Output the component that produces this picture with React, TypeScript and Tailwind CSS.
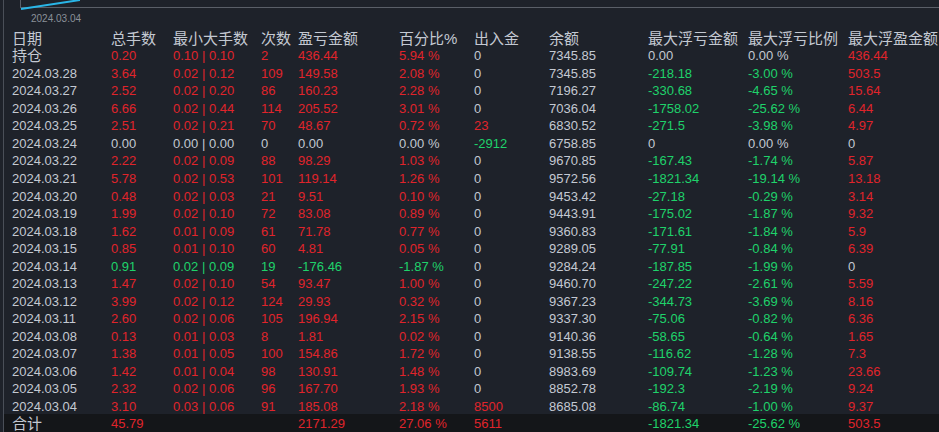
import React from "react";

type C = "r" | "g" | "w";
const R = "text-[#e0242b]", G = "text-[#1fd26a]", W = "text-[#c4c9d2]";
const col = (c: C) => (c === "r" ? R : c === "g" ? G : W);

const rows: [string, string, string, string, string, string, string, string, string, string, string, string][] = [
  ["持仓", "0.20", "0.10 | 0.10", "2", "436.44", "5.94 %", "0", "7345.85", "0.00", "0.00 %", "436.44", "rwwwr"],
  ["2024.03.28", "3.64", "0.02 | 0.12", "109", "149.58", "2.08 %", "0", "7345.85", "-218.18", "-3.00 %", "503.5", "rwggr"],
  ["2024.03.27", "2.52", "0.02 | 0.20", "86", "160.23", "2.28 %", "0", "7196.27", "-330.68", "-4.65 %", "15.64", "rwggr"],
  ["2024.03.26", "6.66", "0.02 | 0.44", "114", "205.52", "3.01 %", "0", "7036.04", "-1758.02", "-25.62 %", "6.44", "rwggr"],
  ["2024.03.25", "2.51", "0.02 | 0.21", "70", "48.67", "0.72 %", "23", "6830.52", "-271.5", "-3.98 %", "4.97", "rrggr"],
  ["2024.03.24", "0.00", "0.00 | 0.00", "0", "0.00", "0.00 %", "-2912", "6758.85", "0", "0.00 %", "0", "wgwww"],
  ["2024.03.22", "2.22", "0.02 | 0.09", "88", "98.29", "1.03 %", "0", "9670.85", "-167.43", "-1.74 %", "5.87", "rwggr"],
  ["2024.03.21", "5.78", "0.02 | 0.53", "101", "119.14", "1.26 %", "0", "9572.56", "-1821.34", "-19.14 %", "13.18", "rwggr"],
  ["2024.03.20", "0.48", "0.02 | 0.03", "21", "9.51", "0.10 %", "0", "9453.42", "-27.18", "-0.29 %", "3.14", "rwggr"],
  ["2024.03.19", "1.99", "0.02 | 0.10", "72", "83.08", "0.89 %", "0", "9443.91", "-175.02", "-1.87 %", "9.32", "rwggr"],
  ["2024.03.18", "1.62", "0.01 | 0.09", "61", "71.78", "0.77 %", "0", "9360.83", "-171.61", "-1.84 %", "5.9", "rwggr"],
  ["2024.03.15", "0.85", "0.01 | 0.10", "60", "4.81", "0.05 %", "0", "9289.05", "-77.91", "-0.84 %", "6.39", "rwggr"],
  ["2024.03.14", "0.91", "0.02 | 0.09", "19", "-176.46", "-1.87 %", "0", "9284.24", "-187.85", "-1.99 %", "0", "gwggw"],
  ["2024.03.13", "1.47", "0.02 | 0.10", "54", "93.47", "1.00 %", "0", "9460.70", "-247.22", "-2.61 %", "5.59", "rwggr"],
  ["2024.03.12", "3.99", "0.02 | 0.12", "124", "29.93", "0.32 %", "0", "9367.23", "-344.73", "-3.69 %", "8.16", "rwggr"],
  ["2024.03.11", "2.60", "0.02 | 0.06", "105", "196.94", "2.15 %", "0", "9337.30", "-75.06", "-0.82 %", "6.36", "rwggr"],
  ["2024.03.08", "0.13", "0.01 | 0.03", "8", "1.81", "0.02 %", "0", "9140.36", "-58.65", "-0.64 %", "1.65", "rwggr"],
  ["2024.03.07", "1.38", "0.01 | 0.05", "100", "154.86", "1.72 %", "0", "9138.55", "-116.62", "-1.28 %", "7.3", "rwggr"],
  ["2024.03.06", "1.42", "0.01 | 0.04", "98", "130.91", "1.48 %", "0", "8983.69", "-109.74", "-1.23 %", "23.66", "rwggr"],
  ["2024.03.05", "2.32", "0.02 | 0.06", "96", "167.70", "1.93 %", "0", "8852.78", "-192.3", "-2.19 %", "9.24", "rwggr"],
  ["2024.03.04", "3.10", "0.03 | 0.06", "91", "185.08", "2.18 %", "8500", "8685.08", "-86.74", "-1.00 %", "9.37", "rrggr"],
];

const widths = ["w-[99px]", "w-[62px]", "w-[88px]", "w-[37px]", "w-[101px]", "w-[75px]", "w-[75px]", "w-[99px]", "w-[100px]", "w-[100px]", "w-[91px]"];
const heads = ["日期", "总手数", "最小大手数", "次数", "盈亏金额", "百分比%", "出入金", "余额", "最大浮亏金额", "最大浮亏比例", "最大浮盈金额"];

export default function App() {
  return (
    <div className="w-[939px] h-[432px] overflow-hidden bg-[#1e222a] relative" style={{ fontFamily: '"Liberation Sans", "Noto Sans CJK SC", sans-serif' }}>
      <div className="absolute left-[3px] top-0 bottom-0 w-px bg-[#4a4f58]" />
      <div className="h-[30px] relative">
        <div className="absolute left-[20px] top-0 w-[919px] h-[8px] border-l border-b border-[#5a5f68]" />
        <svg className="absolute left-[20px] top-0" width="60" height="10">
          <path d="M1 9 L60 0" stroke="#29b6e8" strokeWidth="2" fill="none" />
        </svg>
        <div className="absolute left-[31px] top-[11px] text-[10px] text-[#8a9099]">2024.03.04</div>
      </div>
      <div className="pl-[12px] flex h-[17px] items-center text-[15px] leading-none text-[#c4c9d2]">
        {heads.map((h, i) => (
          <div key={i} className={`${widths[i]} shrink-0 whitespace-nowrap`}>{h}</div>
        ))}
      </div>
      <div className="h-[368px] flex flex-col">
        {rows.map((r, ri) => {
          const cs = r[11].split("") as C[];
          const cc: C[] = ["w", cs[0], cs[0], cs[0], cs[0], cs[0], cs[1], "w", cs[2], cs[3], cs[4]];
          return (
            <div key={ri} className={`pl-[12px] flex flex-1 items-center leading-none ${ri === 0 ? "text-[15px]" : "text-[13px]"}`}>
              {r.slice(0, 11).map((v, i) => (
                <div key={i} className={`${widths[i]} shrink-0 whitespace-nowrap ${col(cc[i])} ${i === 0 ? "" : "text-[13px]"}`}>{v}</div>
              ))}
            </div>
          );
        })}
      </div>
      <div className="absolute left-[4px] right-0 top-[414px] bottom-0 bg-[#141619] pl-[8px] flex items-center text-[13px] leading-none">
        <div className={`${widths[0]} shrink-0 text-[15px] ${W}`}>合计</div>
        <div className={`${widths[1]} shrink-0 ${R}`}>45.79</div>
        <div className={`${widths[2]} shrink-0`} />
        <div className={`${widths[3]} shrink-0`} />
        <div className={`${widths[4]} shrink-0 ${R}`}>2171.29</div>
        <div className={`${widths[5]} shrink-0 ${R}`}>27.06 %</div>
        <div className={`${widths[6]} shrink-0 ${R}`}>5611</div>
        <div className={`${widths[7]} shrink-0`} />
        <div className={`${widths[8]} shrink-0 ${G}`}>-1821.34</div>
        <div className={`${widths[9]} shrink-0 ${G}`}>-25.62 %</div>
        <div className={`${widths[10]} shrink-0 ${R}`}>503.5</div>
      </div>
    </div>
  );
}
